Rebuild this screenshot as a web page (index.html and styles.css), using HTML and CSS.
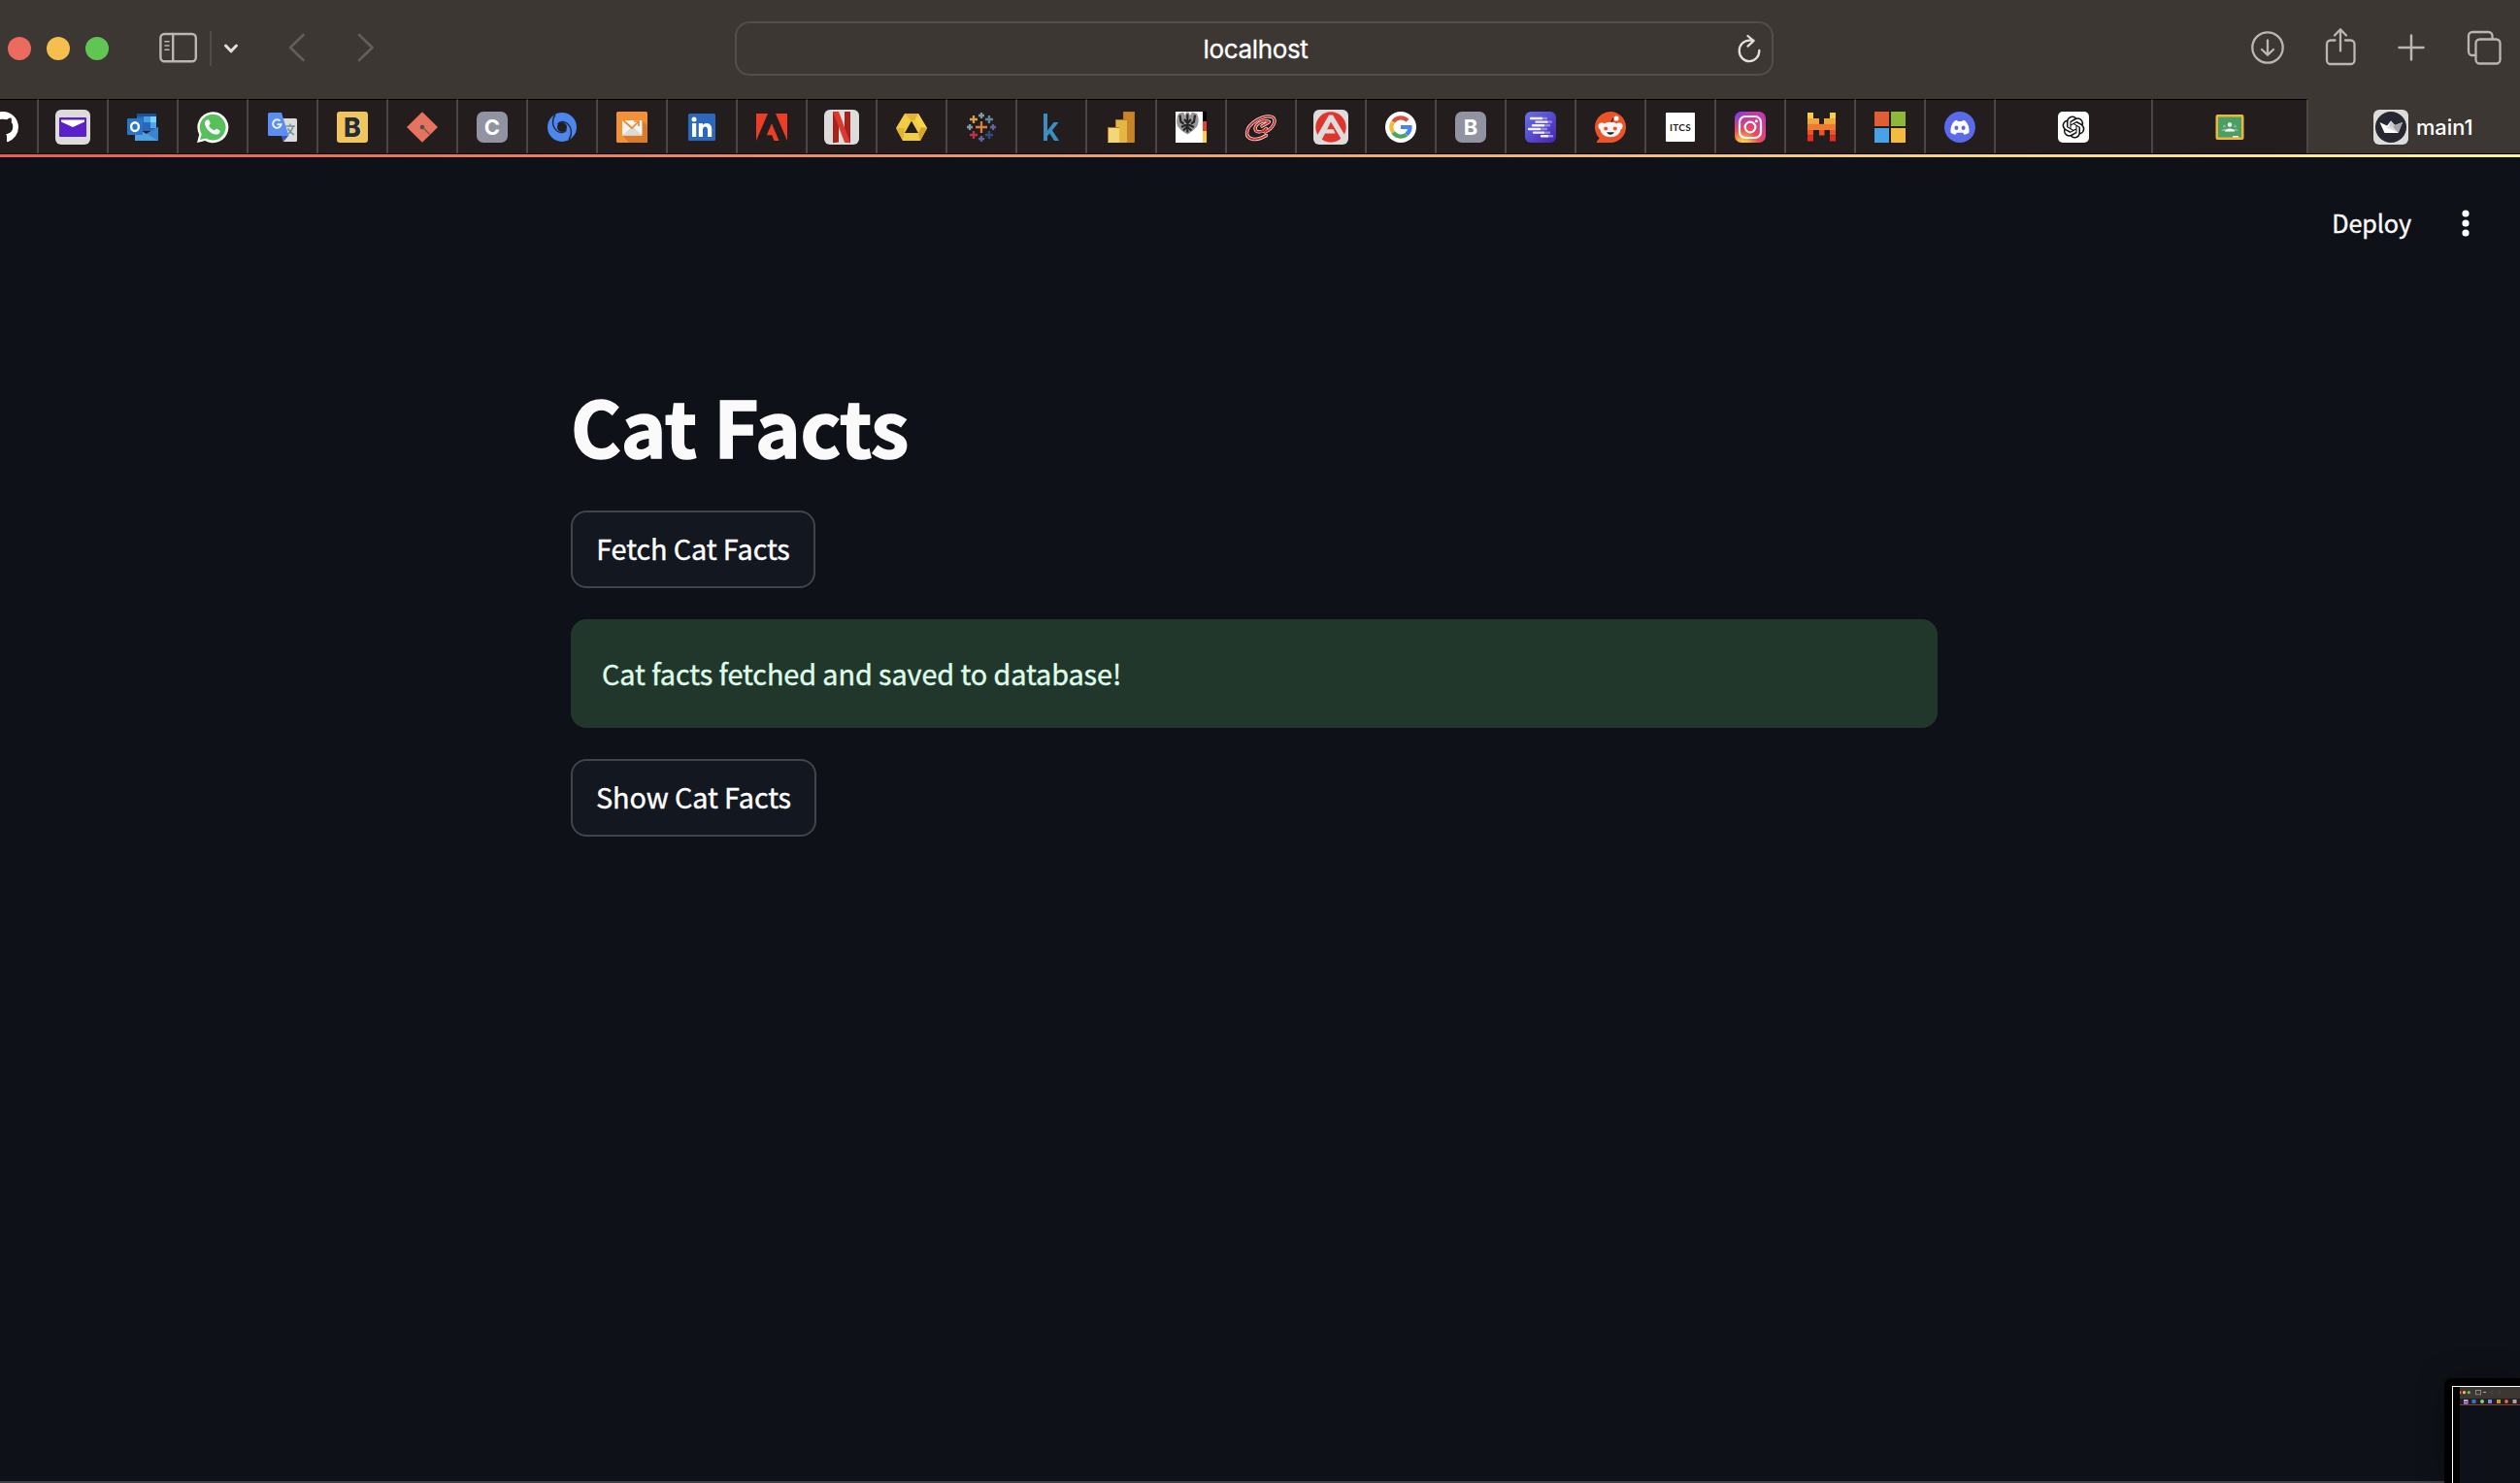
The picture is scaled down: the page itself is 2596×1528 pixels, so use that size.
FILE: index.html
```
<!DOCTYPE html>
<html lang="en">
<head>
<meta charset="utf-8">
<title>main1</title>
<link rel="stylesheet" href="styles.css">
</head>
<body>
<div class="browser">
  <header class="toolbar">
    <div class="toolbar-left">
      <span class="light red"></span><span class="light yellow"></span><span class="light green"></span>
      <svg class="i-sidebar" width="40" height="32" viewBox="0 0 40 32" fill="none" stroke="#bcb6b3" stroke-width="2.4" stroke-linecap="round"><rect x="1.4" y="2" width="36.4" height="28.2" rx="4"/><path d="M14.2 2v28"/><path stroke-width="1.6" d="M6 9.7h4M6 14h4M6 18.3h4"/></svg>
      <span class="divider"></span>
      <svg class="i-chev" width="16" height="12" viewBox="0 0 16 12" fill="none" stroke="#e4dfdc" stroke-width="3" stroke-linecap="round" stroke-linejoin="round"><path d="M2.5 3l5.5 5.8L13.500 3"/></svg>
      <svg class="i-back" width="18" height="30" viewBox="0 0 18 30" fill="none" stroke="#645e5b" stroke-width="2.6" stroke-linecap="round" stroke-linejoin="round"><path d="M15.500 2L2 15l13.500 13"/></svg>
      <svg class="i-fwd" width="18" height="30" viewBox="0 0 18 30" fill="none" stroke="#645e5b" stroke-width="2.6" stroke-linecap="round" stroke-linejoin="round"><path d="M2 2l13.500 13L2 28"/></svg>
    </div>
    <div class="address">
      <span class="address-text">localhost</span>
      <svg class="i-reload" width="26" height="30" viewBox="0 0 26 30" fill="none" stroke="#e2dfdd" stroke-width="2.3" stroke-linecap="round" stroke-linejoin="round"><path d="M23.300 17A10.300 10.800 0 1 1 13 6.600h4.500M11.500 2l6 5.200-6 5.400"/></svg>
    </div>
    <div class="toolbar-right">
      <svg width="36" height="36" viewBox="0 0 36 36" fill="none" stroke="#bcb6b3" stroke-width="2.3" stroke-linecap="round" stroke-linejoin="round"><circle cx="18" cy="18" r="15.700"/><path d="M18 10.500v15M12 20l6 5.700 6-5.700"/></svg>
      <svg class="i-share" width="32" height="40" viewBox="0 0 32 40" fill="none" stroke="#bcb6b3" stroke-width="2.3" stroke-linecap="round" stroke-linejoin="round"><path d="M10.500 13.500H6a4 4 0 0 0-4 4V34a4 4 0 0 0 4 4h20.500a4 4 0 0 0 4-4V17.500a4 4 0 0 0-4-4H21M16 24.500V2.500M10 8.500l6-6.300 6 6.300"/></svg>
      <svg class="i-plus" width="28" height="28" viewBox="0 0 28 28" fill="none" stroke="#bcb6b3" stroke-width="2.5" stroke-linecap="round"><path d="M14 1.500v25M1.500 14h25"/></svg>
      <svg class="i-windows" width="36" height="36" viewBox="0 0 36 36" fill="none" stroke="#bcb6b3" stroke-width="2.3" stroke-linejoin="round" stroke-linecap="round"><rect x="9.500" y="9.500" width="25" height="25" rx="4"/><path d="M9 26H6a4 4 0 0 1-4-4V6a4 4 0 0 1 4-4h16.500a4 4 0 0 1 4 4v3"/></svg>
    </div>
  </header>

  <nav class="tabs">
    <div class="tab first"><svg class="fav" viewBox="0 0 36 36"><path transform="translate(2 2) scale(2)" fill="#fff" d="M8 0C3.580 0 0 3.580 0 8c0 3.540 2.290 6.530 5.470 7.590.4.070.55-.17.55-.38 0-.19-.01-.82-.01-1.490-2.010.37-2.530-.49-2.690-.94-.09-.23-.48-.94-.82-1.130-.28-.15-.68-.52-.01-.53.630-.01 1.080.58 1.230.82.72 1.210 1.870.87 2.330.66.070-.52.28-.87.51-1.070-1.780-.2-3.640-.89-3.640-3.950 0-.87.31-1.590.82-2.150-.08-.2-.36-1.020.08-2.120 0 0 .67-.21 2.200.82.64-.18 1.320-.27 2-.27s1.360.09 2 .27c1.530-1.040 2.200-.82 2.200-.82.44 1.100.16 1.920.08 2.120.51.56.82 1.270.82 2.150 0 3.070-1.870 3.750-3.650 3.950.29.25.54.73.54 1.480 0 1.070-.01 1.930-.01 2.200 0 .21.15.46.55.38A8.010 8.010 0 0 0 16 8c0-4.420-3.580-8-8-8z"/></svg></div>
    <div class="tab"><svg class="fav" viewBox="0 0 36 36"><rect width="36" height="36" rx="6" fill="#dddcdb"/><rect x="4" y="8" width="28" height="20" rx="1" fill="#5a20c9"/><path d="M6 10.500h24v2L18 18 6 12.500z" fill="#fff"/></svg></div>
    <div class="tab"><svg class="fav" viewBox="0 0 36 36"><path d="M12 4h20v18H12z" fill="#2a66ba"/><path d="M12 4h20v3H12z" fill="#1b4f98"/><path d="M19 7h7v6h-7z" fill="#48a0e2"/><path d="M26 7h6v6h-6z" fill="#78d2fb"/><path d="M26 13h6v6h-6z" fill="#4fa5e5"/><path d="M10 18l12 7 12-7v14H10z" fill="#4da2e4"/><path d="M34 18v14L22 24.500z" fill="#3a85d2"/><rect x="2" y="9" width="16" height="17" rx="1" fill="#2a74cc"/><ellipse cx="10" cy="17.600" rx="3.900" ry="4.400" fill="none" stroke="#fff" stroke-width="2.400"/></svg></div>
    <div class="tab"><svg class="fav" viewBox="0 0 36 36"><path d="M2 34l2.200-8.300A16 16 0 1 1 10.200 32z" fill="#fff"/><path d="M5 31l1.700-5.800A13.400 13.400 0 1 1 11 29.500z" fill="#57c05a"/><path d="M13 10.200c-2.300.6-3.500 2.600-2.900 5 1.200 4.800 5.600 9.200 10.600 10.300 2.500.5 4.800-1 5.100-3.300.1-.8-3.500-2.800-4.300-2.500l-1.600 1.900c-2.600-1-4.700-3-5.700-5.300l1.400-1.800c.3-.8-1.200-4.400-2.600-4.300z" fill="#fff"/></svg></div>
    <div class="tab"><svg class="fav" viewBox="0 0 36 36"><path d="M12 9h19.500A1.500 1.500 0 0 1 33 10.500v21a1.500 1.500 0 0 1-1.500 1.500H19z" fill="#dcdcda"/><path d="M17 27h7l-5 6z" fill="#3f4fb2"/><path d="M21.500 17H31M26 14.500V17M29 17c-1 4-3.500 7-6.500 9M23.500 19.500c2 3 4 5 6.500 6.500" fill="none" stroke="#72909d" stroke-width="1.500"/><path d="M4.500 3H17l7.500 24H4.500A1.500 1.500 0 0 1 3 25.500v-21A1.500 1.500 0 0 1 4.500 3z" fill="#5b8ef0"/><path d="M15.500 11.500a4.300 4.300 0 1 0 1.200 3.700h-4.200" fill="none" stroke="#f2f5ff" stroke-width="1.900"/></svg></div>
    <div class="tab"><svg class="fav" viewBox="0 0 36 36"><rect x="2" y="2" width="32" height="32" rx="3" fill="#f0c55c"/><text x="19" y="28" text-anchor="middle" class="b-heavy" fill="#fff0b0">B</text><text x="18" y="28" text-anchor="middle" class="b-heavy" fill="#272b33">B</text></svg></div>
    <div class="tab"><svg class="fav" viewBox="0 0 36 36"><path d="M18 2.300L34 18 18 33.700 2 18z" fill="#e5735e"/><circle cx="18" cy="18" r="2.300" fill="#3e525c"/><path d="M18 18l7.500 7.300" stroke="#6c5552" stroke-width="1.200"/></svg></div>
    <div class="tab"><svg class="fav" viewBox="0 0 36 36"><rect x="2" y="2" width="32" height="32" rx="7" fill="#9193a0"/><text x="18" y="26" text-anchor="middle" class="letter">C</text></svg></div>
    <div class="tab"><svg class="fav" viewBox="0 0 36 36"><circle cx="18" cy="18" r="10" fill="none" stroke="#4e86ee" stroke-width="10"/><path d="M11 5c-4 6-3 13 2 17 3 2.200 7 2 9.500-1M25 31c4-6 3-13-2-17-3-2.200-7-2-9.500 1" fill="none" stroke="#1c2742" stroke-width="1.400"/></svg></div>
    <div class="tab"><svg class="fav" viewBox="0 0 36 36"><rect x="2" y="2" width="32" height="32" rx="1.500" fill="#f29135"/><path d="M28.500 11L34 16.500V34H15L8 26z" fill="#d97b2a"/><rect x="8" y="11" width="20.500" height="15.500" rx="1" fill="#f6f5f3"/><path d="M8 26.500l9-8h3l8.500 8z" fill="#dcdad8"/><path d="M9 11l9 8 7-7M20 12h5v5" fill="none" stroke="#e58a35" stroke-width="1.700"/></svg></div>
    <div class="tab"><svg class="fav" viewBox="0 0 36 36"><rect x="4" y="4" width="28" height="28" rx="1.500" fill="#2b69bf"/><circle cx="10" cy="10" r="2.500" fill="#fff"/><path d="M8 14h4.200v14H8zM14.800 14h4v2c2.200-3.500 9.400-3 9.400 4v8H24v-7c0-4.700-5-4.500-5 0v7h-4.200z" fill="#fff"/></svg></div>
    <div class="tab"><svg class="fav" viewBox="0 0 36 36"><path d="M2 4h12L2 32zM22 4h12v28zM18 14.300L25.500 32h-5l-2.300-5.700H12.800z" fill="#ee3d24"/></svg></div>
    <div class="tab"><svg class="fav" viewBox="0 0 36 36"><rect width="36" height="36" rx="6" fill="#dddcdb"/><path d="M9 2h6v31.500l-6 .8zM21 2h6v32.300l-6-.8z" fill="#a3231f"/><path d="M9 2h6l12 32.300-6-.8z" fill="#dc3830"/></svg></div>
    <div class="tab"><svg class="fav" viewBox="0 0 36 36"><path d="M11 4h14l9 15-7 13H9L2 19z" fill="#f2cc44"/><path d="M11 4h14l-3.500 7h-4zM2 19l9 0-2 13z" fill="#e2b233"/><path d="M25 4l9 15-3 5-9-14z" fill="#f6d64e"/><path d="M27 32l7-13-6-1-3 7z" fill="#d9a52b"/><path d="M18 11.500l7 12.500H11z" fill="#231e1d"/></svg></div>
    <div class="tab"><svg class="fav" viewBox="0 0 36 36" fill="none" stroke-width="2.300"><path d="M18 12v12M12 18h12" stroke="#df7d3c"/><path d="M18 3v6M15 6h6M6 15v6M3 18h6" stroke="#799ca6"/><path d="M26 6v8M22 10h8" stroke="#62889b"/><path d="M10 6v8M6 10h8" stroke="#e79a45"/><path d="M30 15v6M27 18h6M18 27v6M15 30h6" stroke="#626493"/><path d="M10 22v8M6 26h8" stroke="#bd3441"/><path d="M26 22v8M22 26h8" stroke="#2b4c86"/></svg></div>
    <div class="tab"><svg class="fav" viewBox="0 0 36 36"><path d="M10 4h4v17.500l6.500-8.500h5l-6.500 8.300L26 32h-5l-4.800-7.400L14 27.300V32h-4z" fill="#3c8dc0"/></svg></div>
    <div class="tab"><svg class="fav" viewBox="0 0 36 36"><rect x="20" y="2" width="12" height="32" rx="1" fill="#c98428"/><rect x="12" y="10" width="12" height="24" rx="1" fill="#e5b643"/><rect x="4" y="18" width="12" height="16" rx="1" fill="#f1d775"/><path d="M4.500 33V18.500H16M12.500 18v-7.500H24M20.500 10V2.500h11V33" fill="none" stroke="#bd7526"/></svg></div>
    <div class="tab"><svg class="fav" viewBox="0 0 36 36"><rect x="2" y="2" width="32" height="32" fill="#fff"/><path d="M30 2h4v10h-4z" fill="#000"/><path d="M30 12h4v10h-4z" fill="#e9432d"/><path d="M30 22h4v12h-4z" fill="#fdcf45"/><path d="M5 4l5-1.500L12 6l1-3.500h2.500L17 6l2-3.500 5 1.500c2.300 4.500 2.300 10 0 13.500l-4 4-5.500 4-6-3.500L4 17C2.500 13 3 7.500 5 4z" fill="#999"/><path d="M6.500 5.500l1 7 3 2M22 5.500l-1 7-3 2M14.300 4.500v19M11 10l3.500 4L18 10M8 18l6-3 7 3M10 21.500l4-4 4.500 4" fill="none" stroke="#262626" stroke-width="2.200"/></svg></div>
    <div class="tab"><svg class="fav" viewBox="0 0 36 36" fill="none" stroke-linecap="round"><g stroke="#ece5e2" stroke-width="3.400"><path d="M23.500 26.500C13 33 3 31 3.500 23.500 4.500 14 21 4.500 29.500 7.500c5.500 2.500 1.500 12-7.500 15.500"/><path d="M26.500 12.500c-5-2.500-14 1.500-14.500 7 0 5 8 4 11.500 0M26 13l-7 4"/></g><g stroke="#cc302d" stroke-width="1.900"><path d="M23.500 26.500C13 33 3 31 3.500 23.500 4.500 14 21 4.500 29.500 7.500c5.500 2.500 1.500 12-7.500 15.500"/><path d="M26.500 12.500c-5-2.500-14 1.500-14.500 7 0 5 8 4 11.500 0M26 13l-7 4"/></g></svg></div>
    <div class="tab"><svg class="fav" viewBox="0 0 36 36"><rect width="36" height="36" rx="6" fill="#dddcdb"/><circle cx="18" cy="18" r="15.700" fill="#df352f"/><path d="M2.500 29L16 5.500h4L34 29l-4 3.500L18 12.500l-3.800 7.700h6.300l2.200 4.300H12L7.500 33z" fill="#dddcdb"/></svg></div>
    <div class="tab"><svg class="fav" viewBox="0 0 36 36"><circle cx="18" cy="18" r="16" fill="#fff"/><g fill="none" stroke-width="4.200"><path d="M10.200 12.500A9.600 9.600 0 0 1 25 11.300" stroke="#d8503f"/><path d="M10.200 12.500a9.600 9.600 0 0 0 0 11" stroke="#f0bc3d"/><path d="M10.200 23.500a9.600 9.600 0 0 0 13.600 2.200" stroke="#4da55a"/><path d="M18 18h9.500a9.600 9.600 0 0 1-3.700 7.700" stroke="#4b84ec"/></g></svg></div>
    <div class="tab"><svg class="fav" viewBox="0 0 36 36"><rect x="2" y="2" width="32" height="32" rx="7" fill="#9193a0"/><text x="18" y="26" text-anchor="middle" class="letter">B</text></svg></div>
    <div class="tab"><svg class="fav" viewBox="0 0 36 36"><defs><linearGradient id="violet" x1="0" y1="0" x2="1" y2="1"><stop offset="0" stop-color="#6674e6"/><stop offset="1" stop-color="#4a20b5"/></linearGradient></defs><rect x="2" y="2" width="32" height="32" rx="6" fill="url(#violet)"/><g stroke-width="2.400" stroke-linecap="round"><path d="M18 9h6M24 12.600h5M21 16.300h6M18 20h6M21 23.600h6M25 27.300h5" stroke="#928ee2"/><path d="M8 9h11M13.500 12.600h11M10 16.300h11M6 20h11M11 23.600h10M19 27.300h6" stroke="#f3f0ff"/></g></svg></div>
    <div class="tab"><svg class="fav" viewBox="0 0 36 36"><path d="M18 2a16 16 0 1 1 0 32H4.500c-1 0-1-1 0-2l2.200-2.600A16 16 0 0 1 18 2z" fill="#ec5428"/><path d="M18 14.500l3-5.500 3 0" fill="none" stroke="#3a1c14" stroke-width="1.300"/><circle cx="24" cy="9" r="2.600" fill="#fff"/><circle cx="9" cy="17" r="3.600" fill="#fff"/><circle cx="27" cy="17" r="3.600" fill="#fff"/><ellipse cx="18" cy="20.500" rx="10.500" ry="7.800" fill="#f4f6f8"/><circle cx="13.200" cy="19.500" r="2" fill="#ec5428"/><circle cx="22.800" cy="19.500" r="2" fill="#ec5428"/><path d="M14.200 23.300h7.600c-1 3.300-6.600 3.300-7.600 0z" fill="#222"/></svg></div>
    <div class="tab"><svg class="fav" viewBox="0 0 36 36"><rect x="3" y="3" width="30" height="30" rx="1" fill="#fff"/><text x="18" y="21.500" text-anchor="middle" class="itcs">ITCS</text></svg></div>
    <div class="tab"><svg class="fav" viewBox="0 0 36 36"><defs><radialGradient id="insta" cx=".27" cy="1.080" r="1.050"><stop offset="0" stop-color="#fd5"/><stop offset=".2" stop-color="#fbb447"/><stop offset=".48" stop-color="#ee4a55"/><stop offset="1" stop-color="#c837ab"/></radialGradient><radialGradient id="insta-blue" cx="0" cy="0" r=".6"><stop offset="0" stop-color="#5b49f0"/><stop offset="1" stop-color="#a035e0" stop-opacity="0"/></radialGradient></defs><rect x="2" y="2" width="32" height="32" rx="7" fill="url(#insta)"/><rect x="2" y="2" width="32" height="32" rx="7" fill="url(#insta-blue)"/><rect x="7" y="7" width="22" height="22" rx="6" fill="none" stroke="#fff" stroke-width="2.200"/><circle cx="18" cy="18" r="5.300" fill="none" stroke="#fff" stroke-width="2.200"/><circle cx="24.300" cy="11.700" r="1.500" fill="#fff"/></svg></div>
    <div class="tab"><svg class="fav" viewBox="0 0 36 36"><path d="M5 3h6v6H5zM28 3h6v6h-6z" fill="#f5cf48"/><path d="M5 9h12v6H5zM22 9h12v6H22z" fill="#f0a83d"/><path d="M5 14.800h29v6.200H5z" fill="#ed7a30"/><path d="M5 21h6v5.500H5zM17 21h5.500v5.500H17zM28 21h6v5.500h-6z" fill="#ea5528"/><path d="M5 26.500h6v6H5zM28 26.500h6v6h-6z" fill="#e52e20"/></svg></div>
    <div class="tab"><svg class="fav" viewBox="0 0 36 36"><path d="M2 2h15v15H2z" fill="#e15d34"/><path d="M19 2h15v15H19z" fill="#8db83a"/><path d="M2 19h15v15H2z" fill="#47a2e8"/><path d="M19 19h15v15H19z" fill="#f5bb41"/></svg></div>
    <div class="tab"><svg class="fav" viewBox="0 0 36 36"><circle cx="18" cy="18" r="16" fill="#5a6aea"/><path d="M12.500 11.500l2.500-.8.800 1.300h4.400l.8-1.300 2.500.8c3 3 4.500 7.500 4 12-1.600 1.400-3.300 2-5 2.200l-1.300-2h-6.400l-1.300 2c-1.700-.2-3.400-.8-5-2.200-.5-4.500 1-9 4-12z" fill="#fff"/><ellipse cx="14.400" cy="18.800" rx="2" ry="2.200" fill="#5a6aea"/><ellipse cx="21.600" cy="18.800" rx="2" ry="2.200" fill="#5a6aea"/></svg></div>
    <div class="tab chat"><svg class="fav" viewBox="0 0 36 36"><rect x="2" y="2" width="32" height="32" rx="5" fill="#fff"/><path transform="translate(6.500 6.500) scale(.958)" fill="#111" d="M22.282 9.821a5.985 5.985 0 0 0-.516-4.911 6.046 6.046 0 0 0-6.510-2.900A6.065 6.065 0 0 0 4.981 4.182a5.985 5.985 0 0 0-3.998 2.900 6.046 6.046 0 0 0 .743 7.097 5.980 5.980 0 0 0 .511 4.911 6.051 6.051 0 0 0 6.515 2.900A5.985 5.985 0 0 0 13.260 24a6.056 6.056 0 0 0 5.772-4.206 5.990 5.990 0 0 0 3.998-2.900 6.056 6.056 0 0 0-.748-7.073zM13.260 22.430a4.476 4.476 0 0 1-2.876-1.041l.141-.081 4.779-2.758a.795.795 0 0 0 .393-.681v-6.737l2.020 1.169a.071.071 0 0 1 .038.052v5.583a4.504 4.504 0 0 1-4.495 4.494zM3.600 18.304a4.471 4.471 0 0 1-.535-3.014l.142.085 4.783 2.759a.771.771 0 0 0 .781 0l5.843-3.369v2.332a.080.080 0 0 1-.033.062L9.740 19.950a4.499 4.499 0 0 1-6.140-1.646zM2.340 7.896a4.485 4.485 0 0 1 2.366-1.973V11.600a.766.766 0 0 0 .388.677l5.815 3.354-2.020 1.169a.076.076 0 0 1-.071 0l-4.830-2.787A4.504 4.504 0 0 1 2.340 7.872zm16.597 3.855l-5.833-3.387L15.119 7.200a.076.076 0 0 1 .071 0l4.830 2.791a4.494 4.494 0 0 1-.676 8.105v-5.678a.790.790 0 0 0-.407-.667zm2.010-3.023l-.141-.085-4.774-2.782a.776.776 0 0 0-.785 0L9.409 9.230V6.897a.066.066 0 0 1 .028-.061l4.830-2.787a4.499 4.499 0 0 1 6.680 4.660zM8.307 12.863l-2.020-1.164a.080.080 0 0 1-.038-.057V6.075a4.499 4.499 0 0 1 7.376-3.454l-.142.081L8.704 5.460a.795.795 0 0 0-.393.681zm1.097-2.365l2.602-1.500 2.607 1.500v2.999l-2.597 1.500-2.607-1.500z"/></svg></div>
    <div class="tab class"><svg class="fav" viewBox="0 0 36 36"><rect x="3.500" y="5" width="29" height="26" rx="2" fill="#f0b63c"/><rect x="6" y="7.500" width="24" height="21" fill="#4a9f64"/><g fill="#7fbe90"><circle cx="12.500" cy="17" r="1.500"/><circle cx="23.500" cy="17" r="1.500"/><path d="M9.500 22c0-2.500 4-3 6-1.500v1.500zM26.500 22c0-2.500-4-3-6-1.500v1.500z"/></g><circle cx="18" cy="15.500" r="2.200" fill="#fff"/><path d="M13 22.500c0-4 10-4 10 0z" fill="#fff"/><path d="M21 27h6v1.500h-6z" fill="#f3f3ee"/></svg></div>
    <div class="tab active"><svg class="fav" viewBox="0 0 36 36"><rect width="36" height="36" rx="6" fill="#dddcdb"/><circle cx="18" cy="18" r="16" fill="#262730"/><path d="M6.500 13l7.500 3.500L18 11.500l4 4.500 8-3-4.500 11h-14z" fill="#fff"/><path d="M18 11.500l4 4.500-1.500 2.500L16 17z" fill="#c9c8cc"/><path d="M30 13l-8 3-2 2.500 5.500 5.500z" fill="#a3a3a8"/><path d="M16 17l4.500 1.500 5 5.500L13 18z" fill="#dddce0"/></svg><span class="tab-title">main1</span></div>
  </nav>
  <div class="rainbow"></div>

  <main class="app">
    <div class="app-header"><span class="deploy">Deploy</span><svg width="8" height="28" viewBox="0 0 8 28" fill="#fafafa"><circle cx="4" cy="4" r="3.600"/><circle cx="4" cy="14" r="3.600"/><circle cx="4" cy="24" r="3.600"/></svg></div>
    <section class="content">
      <h1>Cat Facts</h1>
      <button class="btn fetch">Fetch Cat Facts</button>
      <div class="alert">Cat facts fetched and saved to database!</div>
      <button class="btn show">Show Cat Facts</button>
    </section>
  </main>

  <div class="preview">
    <div class="preview-frame">
      <svg width="62" height="99" viewBox="0 0 62 99"><rect width="62" height="99" fill="#0e1117"/><rect width="62" height="12" fill="#3d3734"/><rect y="12" width="62" height="6.500" fill="#231e1d"/><path d="M0 18.500h62" stroke="#8a3e38"/><circle cx="0" cy="5.700" r="1.600" fill="#ed6a5e"/><circle cx="4.500" cy="5.700" r="1.600" fill="#f4bf4f"/><circle cx="9.300" cy="5.700" r="1.600" fill="#61c554"/><rect x="16.500" y="3.500" width="5" height="4.300" fill="none" stroke="#8b8582"/><path d="M24 5.500h3" stroke="#aaa"/><path d="M34 3.500l-2 2 2 2M40 3.500l2 2-2 2" fill="none" stroke="#5a5451"/><g><rect x="4" y="13" width="4.500" height="4.500" fill="#b6a7dd"/><path d="M4.500 15.500h3.500" stroke="#5a20c9"/><rect x="12.500" y="13" width="4" height="4" fill="#2c78c8"/><circle cx="23" cy="15" r="2" fill="#80d480"/><rect x="29" y="13" width="4" height="4" fill="#6b90df"/><rect x="38" y="13" width="4" height="4" fill="#bd9945"/><circle cx="48" cy="15" r="1.900" fill="#d76a55"/><rect x="54.500" y="13" width="4" height="4" fill="#a5a5ae"/></g></svg>
    </div>
  </div>
</div>
</body>
</html>
```
FILE: styles.css
```
* { box-sizing: border-box; }

body {
  margin: 0;
  background: #0e1117;
  font-family: "Noto Sans CJK SC", "Noto Sans", sans-serif;
}

svg { display: block; flex: none; }

.browser {
  position: relative;
  display: flex;
  flex-direction: column;
  width: 2596px;
  height: 1528px;
  overflow: hidden;
}

/* Window toolbar */
.toolbar {
  display: grid;
  grid-template-columns: 757px 1070px 1fr;
  height: 102px;
  padding-top: 22px;
  background: #3d3734;
}

.toolbar-left,
.toolbar-right {
  display: flex;
  align-items: center;
  height: 56px;
}

.toolbar-left { padding-left: 8px; }

.light {
  width: 24px;
  height: 24px;
  margin-right: 16px;
  border-radius: 50%;
}

.red { background: #ed6a5e; }
.yellow { background: #f5bf4f; }
.green { background: #61c554; }

.i-sidebar { margin: -3px 0 0 36px; }
.divider { width: 2px; height: 36px; margin-left: 12px; background: #524c49; }
.i-chev { margin-left: 12px; }
.i-back { margin: -2px 0 0 51px; }
.i-fwd { margin: -2px 0 0 53px; }

.address {
  display: grid;
  grid-template-columns: 1fr auto 1fr;
  align-items: center;
  height: 56px;
  border: 2px solid #544e4b;
  border-radius: 15px;
}

.address-text {
  grid-column: 2;
  padding: 2px 0 0 3px;
  color: #fff;
  font: 400 26px/32px Inter, sans-serif;
  letter-spacing: -.35px;
  -webkit-text-stroke: .3px #fff;
}

.i-reload { justify-self: end; margin-right: 10px; }

.toolbar-right {
  justify-content: flex-end;
  padding: 0 19px 2px 0;
}

.i-share { margin: -3px 0 0 41px; }
.i-plus { margin: -1px 0 0 43px; }
.i-windows { margin-left: 43px; }

/* Tab strip */
.tabs {
  display: flex;
  height: 56px;
}

.tab {
  display: flex;
  flex: none;
  align-items: center;
  justify-content: center;
  width: 72px;
  border-top: 1px solid #000;
  border-right: 2px solid #4c4745;
  background: #231e1d;
}

.tab.first { margin-left: -32px; }
.tab.chat { width: 162px; }
.tab.class { width: 160px; }

.tab.active {
  justify-content: flex-start;
  width: 218px;
  padding-left: 67px;
  border-top-color: #3d3734;
  border-right: 0;
  background: #3d3734;
}

.fav { width: 36px; height: 36px; }

.tab-title {
  margin-left: 8px;
  color: #fff;
  font: 500 21.800px/30px Inter, sans-serif;
}

.b-heavy { font: 800 27px Inter, sans-serif; }
.letter { font: 700 22px Inter, sans-serif; fill: #fff; }
.itcs { font: 700 10px Lato, sans-serif; fill: #222; letter-spacing: .3px; }

.rainbow {
  height: 4px;
  border-top: 1px solid #000;
  background: linear-gradient(to right, #ee5a52, #f09068 35%, #f4b374 60%, #fbdc82 82%, #fdf48f);
}

/* Page */
.app { flex: 1; background: #0e1117; }

.app-header {
  display: flex;
  align-items: center;
  justify-content: flex-end;
  gap: 52px;
  height: 136px;
  padding-right: 52px;
}

.deploy {
  padding-bottom: 2px;
  color: #fafafa;
  font-size: 25.200px;
  line-height: 40px;
  letter-spacing: -.08px;
  -webkit-text-stroke: .4px #fafafa;
}

.content {
  display: flex;
  flex-direction: column;
  align-items: flex-start;
  gap: 32px;
  width: 1408px;
  margin: 89px 0 0 588px;
}

h1 {
  margin: 0;
  padding-bottom: 5px;
  color: #fafafa;
  font-size: 79.200px;
  font-weight: 700;
  line-height: 102px;
  letter-spacing: -.3px;
  -webkit-text-stroke: 1.600px #fafafa;
}

.btn {
  height: 80px;
  padding: 0 0 2px;
  border: 2px solid #41444b;
  border-radius: 16px;
  background: #131720;
  color: #fff;
  font: 400 28.800px/48px "Noto Sans CJK SC", sans-serif;
  letter-spacing: -.1px;
  -webkit-text-stroke: .4px #fff;
}

.fetch { width: 252px; }
.show { width: 253px; }

.alert {
  width: 100%;
  height: 112px;
  padding: 32px;
  border-radius: 16px;
  background: #21372b;
  color: #dffde9;
  font-size: 28.800px;
  line-height: 48px;
  letter-spacing: -.08px;
  -webkit-text-stroke: .4px #dffde9;
}

/* Floating screenshot thumbnail, over the page */
.preview {
  position: absolute;
  z-index: 1;
  right: 0;
  bottom: 0;
  width: 78px;
  height: 108px;
  padding: 8px 0 0 8px;
  border-top-left-radius: 8px;
  background: #000;
  box-shadow: 0 0 30px rgba(0, 0, 0, .25);
}

.preview-frame {
  height: 100px;
  padding-left: 7px;
  border-top: 1px solid #fff;
  border-left: 1px solid #fff;
}

.browser::after {
  content: "";
  position: absolute;
  bottom: 0;
  left: 0;
  width: 2518px;
  height: 2px;
  background: #3f3f44;
}
```
